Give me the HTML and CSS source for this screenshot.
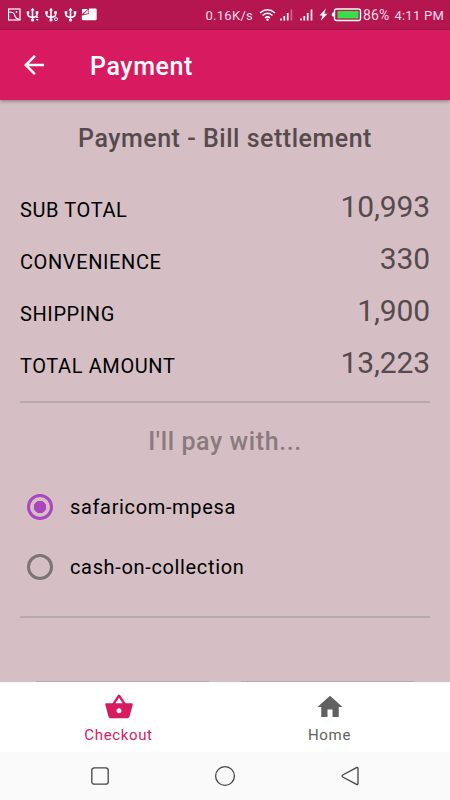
FILE: index.html
```html
<!DOCTYPE html>
<html lang="en">
<head>
  <meta charset="UTF-8" />
  <meta name="viewport" content="width=device-width, initial-scale=1.0" />
  <title>Payment</title>
  <link rel="stylesheet" href="styles.css">
</head>
<body>
  <!-- Status bar -->
  <div class="status-bar">
    <svg class="status-left" width="92" height="16" viewBox="0 0 92 16" fill="none" stroke="#fff" stroke-width="1.2">
      <rect x="1.600" y="2" width="11.4" height="11"/>
      <path d="M2 5c4 0 5 1 6 4 .5 2 2 3 4 3"/>
      <circle cx="9.5" cy="5" r=".9" fill="#fff" stroke="none"/>
      <g id="usb">
        <path d="M25.5 2.5v11M21 5v3q0 1.5 4.500 2.500M30 5v3q0 1.500-4.500 2.500" stroke-width="1.6"/>
        <path d="M25.500 .7l2 2.800h-4zM19.700 4.300h2.600v2.400h-2.600zM28.700 4.300h2.600v2.400h-2.600z" fill="#fff" stroke="none"/>
        <circle cx="25.500" cy="13" r="1.600" fill="#fff" stroke="none"/>
      </g>
      <use href="#usb" x="18.500"/>
      <use href="#usb" x="38"/>
      <path d="M28.700 11l1.500-2 1.500 2zM28.700 12l1.500 2 1.500-2z" fill="#fff" stroke="none"/>
      <circle cx="49" cy="12.200" r="1.500" stroke-width="1"/>
      <path d="M82 1.500H88.500q1.200 0 1.200 1.200V12q0 1.300-1.200 1.300H76q-1.200 0-1.200-1.300V8.500L82 7z" fill="#fff" stroke="none"/>
      <path d="M75 7V2h6zM76.500 7.200l5-1V2.500z" fill="#fff" stroke="none"/>
    </svg>
    <span class="speed">0.16K/s</span>
    <svg class="status-right" width="104" height="16" viewBox="0 0 104 16" fill="none" stroke="#fff">
      <path d="M1 6q7.500-6.500 15 0M3.500 8.500q5-4.500 10 0M6 11q2.500-2.200 5 0" stroke-width="1.500"/>
      <circle cx="8.500" cy="12.700" r="1.200" fill="#fff" stroke="none"/>
      <path d="M22 11.500v2M25.300 9v4.500M28.700 6v7.500M42 11.500v2M45.300 9v4.500M48.700 6v7.500M52.500 2.500v11" stroke-width="1.700"/>
      <path d="M32.400 2.500v11" stroke-width="1.700" opacity=".35"/>
      <path d="M67 1.500l-6.500 7h3L61.700 14l6.700-7.300h-3.100z" fill="#fff" stroke="none"/>
      <path d="M75 5.500h-1.500q-1.500 2 0 4H75" fill="#fff" stroke="none"/>
      <rect x="75.500" y="2" width="26" height="11.500" rx="2" stroke-width="1.400"/>
      <path d="M78.500 4h21v7.500h-21z" fill="#3bdc49" stroke="none"/>
    </svg>
    <span class="battery">86%</span>
    <span class="clock">4:11 PM</span>
  </div>

  <header class="app-bar">
    <svg class="back" width="30" height="30" viewBox="0 0 24 24" fill="#fff">
      <path d="M20 11H7.830l5.590-5.590L12 4l-8 8 8 8 1.410-1.410L7.830 13H20v-2z"/>
    </svg>
    <h1>Payment</h1>
  </header>

  <main class="content">
    <h2>Payment - Bill settlement</h2>

    <div class="totals">
      <div class="row"><span class="label">SUB TOTAL</span><span class="amount">10,993</span></div>
      <div class="row"><span class="label">CONVENIENCE</span><span class="amount">330</span></div>
      <div class="row"><span class="label">SHIPPING</span><span class="amount">1,900</span></div>
      <div class="row"><span class="label">TOTAL AMOUNT</span><span class="amount">13,223</span></div>
    </div>

    <h3>I'll pay with...</h3>

    <div class="methods">
      <label class="method"><input type="radio" name="method" checked><span>safaricom-mpesa</span></label>
      <label class="method"><input type="radio" name="method"><span>cash-on-collection</span></label>
    </div>

    <div class="buttons"><div></div><div></div></div>
  </main>

  <nav class="tabs">
    <a class="tab active">
      <svg width="30" height="30" viewBox="0 0 24 24" fill="currentColor">
        <path d="M17.210 9l-4.380-6.560c-.190-.280-.510-.420-.830-.420-.320 0-.640.140-.830.430L6.790 9H2c-.550 0-1 .450-1 1 0 .090.010.180.040.270l2.540 9.270c.230.840 1 1.460 1.920 1.460h13c.920 0 1.690-.620 1.930-1.460l2.540-9.270L23 10c0-.550-.450-1-1-1h-4.790zM9 9l3-4.400L15 9H9zm3 8c-1.100 0-2-.900-2-2s.900-2 2-2 2 .900 2 2-.900 2-2 2z"/>
      </svg>
      <span>Checkout</span>
    </a>
    <a class="tab">
      <svg width="30" height="30" viewBox="0 0 24 24" fill="currentColor">
        <path d="M10 20v-6h4v6h5v-8h3L12 3 2 12h3v8z"/>
      </svg>
      <span>Home</span>
    </a>
  </nav>

  <!-- System buttons -->
  <div class="system-nav">
    <svg width="24" height="24" viewBox="0 0 24 24"><rect x="3.800" y="3.800" width="16.400" height="16.400" rx="2.500"/></svg>
    <svg width="24" height="24" viewBox="0 0 24 24"><circle cx="12" cy="12" r="9.400"/></svg>
    <svg width="24" height="24" viewBox="0 0 24 24"><path d="M18.500 3.700q1.500-.7 1.500 1v14.600q0 1.700-1.500 1L4.700 13q-1.400-1 0-2z"/></svg>
  </div>
</body>
</html>
```

FILE: styles.css
```css
* {
  box-sizing: border-box;
}
body {
  margin: 0;
  height: 800px;
  display: flex;
  flex-direction: column;
  overflow: hidden;
  font-family: Roboto, sans-serif;
  background: #d5bfc5;
}
h1, h2, h3 {
  margin: 0;
  font-weight: 500;
}

.status-bar {
  height: 30px;
  flex: none;
  display: flex;
  align-items: center;
  padding: 0 6px 0 7px;
  background: #b5164f;
  color: #f7dbe5;
  font-size: 13px;
  white-space: nowrap;
}
.speed {
  margin-left: auto;
  letter-spacing: 0.3px;
}
.status-right {
  margin-left: 6px;
}
.battery {
  font-size: 14px;
  letter-spacing: 0.1px;
}
.clock {
  margin-left: 5px;
  letter-spacing: 0.25px;
}

.app-bar {
  height: 70px;
  flex: none;
  display: flex;
  align-items: center;
  padding: 0 19px;
  background: #d81b60;
  box-shadow: 0 1px 4px rgba(0,0,0,0.4);
  color: #fff;
}
.app-bar h1 {
  margin: 3px 0 0 41px;
  font-size: 25px;
  letter-spacing: 0.6px;
}

.content {
  flex: 1;
  display: flex;
  flex-direction: column;
  padding: 21px 20px 0;
}
h2 {
  line-height: 36px;
  font-size: 25px;
  letter-spacing: 0.52px;
  text-align: center;
  color: #574a4d;
}
.totals {
  margin-top: 25px;
  padding-bottom: 11px;
  border-bottom: 2px solid #b8a9ad;
}
.row {
  height: 52px;
  display: flex;
  justify-content: space-between;
  align-items: center;
}
.label {
  margin-top: 4px;
  font-size: 20px;
  letter-spacing: 0.6px;
}
.amount {
  margin-top: -4px;
  font-size: 30px;
  letter-spacing: -0.1px;
  color: #574a4d;
}
h3 {
  margin-top: 21px;
  line-height: 36px;
  font-size: 25px;
  letter-spacing: 0.6px;
  text-align: center;
  color: #8a7a7e;
}
.methods {
  padding: 17px 0 19px;
  border-bottom: 2px solid #b8a9ad;
}
.method {
  height: 60px;
  display: flex;
  align-items: center;
  padding-left: 7px;
  font-size: 20px;
  letter-spacing: 0.65px;
}
.method input {
  appearance: none;
  width: 26px;
  height: 26px;
  margin: -1px 17px 0 0;
  border: 3px solid #7b7476;
  border-radius: 50%;
}
.method input:checked {
  border-color: #ab47bc;
  background: radial-gradient(circle, #ab47bc 6px, transparent 6.5px);
}
.buttons {
  margin-top: auto;
  padding: 0 16px;
  display: flex;
  gap: 32px;
}
.buttons div {
  flex: 1;
  height: 1px;
  background: #b8a9ad;
}

.tabs {
  height: 70px;
  flex: none;
  display: flex;
  padding: 0 15px 0 13px;
  background: #fff;
}
.tab {
  flex: 1;
  display: flex;
  flex-direction: column;
  align-items: center;
  padding-top: 10px;
  color: #616161;
  font-size: 15px;
  letter-spacing: 0.65px;
}
.tab span {
  margin-top: 4px;
}
.tab.active {
  color: #d81b60;
}

.system-nav {
  height: 48px;
  flex: none;
  display: flex;
  justify-content: space-around;
  align-items: center;
  padding: 0 37px;
  background: #fafafa;
}
.system-nav svg {
  fill: none;
  stroke: #444;
  stroke-width: 1.3;
}
```
